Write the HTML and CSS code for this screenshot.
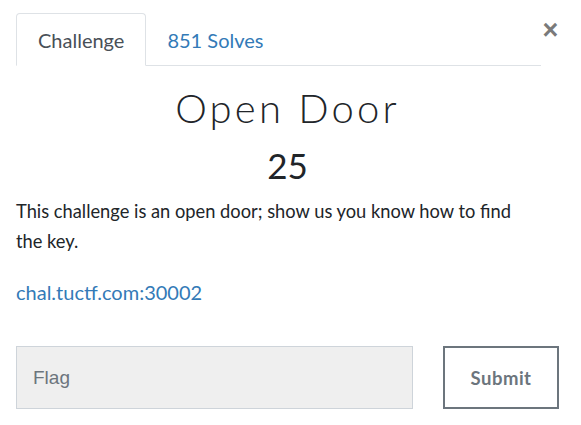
FILE: index.html
```html
<!DOCTYPE html>
<html>
<head>
<meta charset="utf-8">
<link rel="stylesheet" href="styles.css">
</head>
<body>
<div class="modal">
  <div class="header">
    <nav class="tabs">
      <a class="tab active">Challenge</a>
      <a class="tab link">851 Solves</a>
    </nav>
    <button class="close" aria-label="Close">&times;</button>
  </div>
  <div class="body">
    <h2 class="title">Open Door</h2>
    <h3 class="points">25</h3>
    <p class="desc">This challenge is an open door; show us you know how to find the key.</p>
    <p class="url"><a>chal.tuctf.com:30002</a></p>
    <form class="flag-row">
      <input class="flag" type="text" placeholder="Flag">
      <button class="submit" type="button">Submit</button>
    </form>
  </div>
</div>
</body>
</html>
```
FILE: styles.css
```css
html, body {
  margin: 0;
  padding: 0;
  background: #ffffff;
}
body {
  font-family: Lato, "Liberation Sans", sans-serif;
  color: #212529;
}
.modal {
  padding: 13px 0 0 16px;
}
.header {
  display: flex;
  align-items: flex-start;
}
.tabs {
  display: flex;
  width: 525px;
  border-bottom: 1px solid #dee2e6;
}
.tab {
  display: block;
  height: 51px;
  line-height: 53px;
  padding: 0 21px;
  font-size: 20px;
  margin-bottom: -1px;
  border: 1px solid transparent;
  border-radius: 4px 4px 0 0;
  cursor: pointer;
}
.tab.active {
  color: #495057;
  border-color: #dee2e6 #dee2e6 #ffffff;
  background: #ffffff;
}
.tab.link {
  color: #337ab7;
  padding: 0 20px;
}
.close {
  margin: 7px 0 0 1px;
  padding: 0;
  width: 17px;
  height: 20px;
  border: 0;
  background: none;
  font-family: "Liberation Sans", Arial, sans-serif;
  font-size: 27px;
  font-weight: 700;
  line-height: 20px;
  color: #7a7a7a;
}
.body {
  width: 543px;
}
.title {
  margin: 18px 0 0 -18px;
  width: 579px;
  text-align: center;
  font-size: 40px;
  font-weight: 300;
  letter-spacing: 3.2px;
  line-height: 48px;
  color: #212529;
}
.points {
  margin: 13px 0 0 -18px;
  width: 579px;
  text-align: center;
  font-size: 35px;
  font-weight: 400;
  line-height: 40px;
  color: #212529;
}
.desc {
  margin: 11px 0 0 0;
  width: 505px;
  font-size: 18.3px;
  line-height: 30px;
}
.url {
  margin: 20px 0 0 0;
  font-size: 20px;
  line-height: 32px;
}
.url a {
  color: #337ab7;
}
.flag-row {
  display: flex;
  margin-top: 38px;
  justify-content: space-between;
}
.flag {
  box-sizing: border-box;
  width: 397px;
  height: 63px;
  padding: 0 16px;
  border: 1px solid #ced4da;
  background: #efefef;
  font-family: "Liberation Sans", Arial, sans-serif;
  font-size: 19px;
  color: #495057;
  outline: none;
}
.flag::placeholder {
  color: #6c757d;
}
.submit {
  box-sizing: border-box;
  width: 116px;
  height: 63px;
  border: 2px solid #6c757d;
  background: #ffffff;
  font-family: Lato, "Liberation Sans", sans-serif;
  font-weight: 700;
  font-size: 18.5px;
  letter-spacing: 0.5px;
  color: #6c757d;
}
```
